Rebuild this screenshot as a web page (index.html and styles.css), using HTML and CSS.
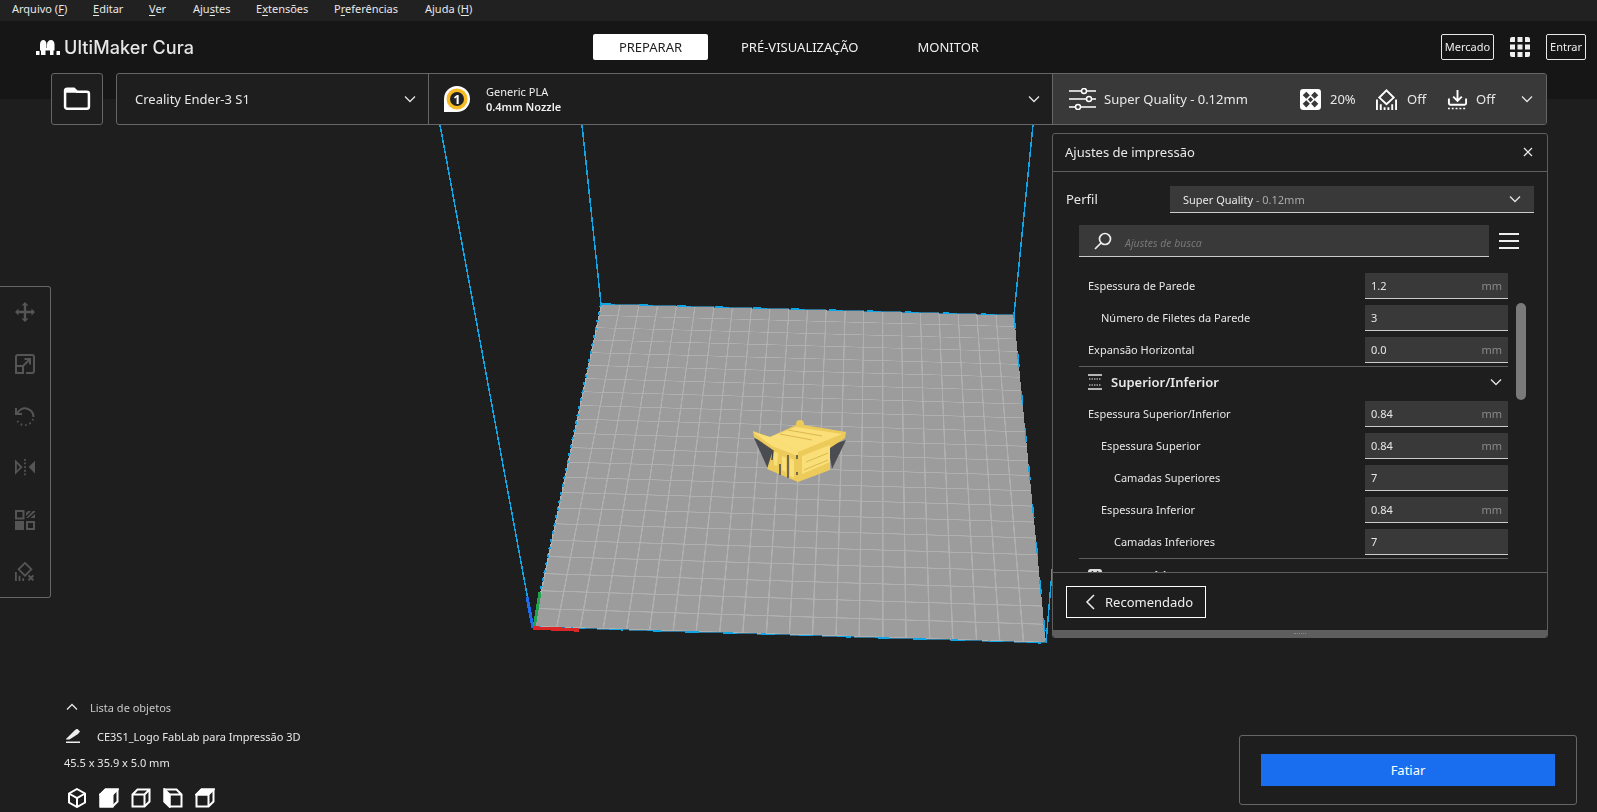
FILE: index.html
```html
<!DOCTYPE html>
<html lang="pt">
<head>
<meta charset="utf-8">
<title>UltiMaker Cura</title>
<link rel="stylesheet" href="styles.css">
</head>
<body>
<div class="app">
  <div class="scene">
    <div class="plate"></div>
    <svg class="wires" viewBox="0 0 1597 812">
      <g class="wire">
        <path d="M440 125 L533 627"/>
        <path d="M582 125 L601 304"/>
        <path d="M1033 125 L1014 315"/>
        <path d="M1046 643 L1053 560"/>
      </g>
      <g class="edge">
        <path d="M601 304 L1014 315"/>
        <path d="M533 627 L1046 643"/>
      </g>
      <g class="edge-hi">
        <path d="M601 304 L1014 315"/>
        <path d="M533 627 L1046 643"/>
        <path d="M1014 315 L1046 643"/>
      </g>
      <path class="edge-side" d="M601 304 L533 627"/>
      <path class="axis-blue" d="M527 597 L533 628"/>
      <path class="axis-green" d="M540 592 L534 628"/>
      <path class="axis-red" d="M533 628 L579 630"/>
    </svg>
    <svg class="model" viewBox="0 0 130 100">
      <path fill="#4b4b52" d="M24 38 L38 69 L45 50 L30 40Z"/>
      <path fill="#4b4b52" d="M116 40 L102 69 L98 46Z"/>
      <path fill="#eccb5a" d="M23 31 L40 37 L68 24 L116 32 L115 38 L100 48 L100 70 L68 82 L37 69 L43 50 L24 37Z"/>
      <path fill="#fadf79" d="M40 37 L66 27 L112 34 L68 52Z"/>
      <path fill="#fadf79" d="M23 32 L40 37 L68 52 L68 56 L42 46Z"/>
      <path fill="#fadf79" d="M72 56 L100 45 L100 62 L72 74Z"/>
      <path fill="#fadf79" d="M44 52 L48 53 L47 66 L44 65Z M52 56 L56 58 L56 72 L52 70Z M60 58 L64 60 L64 78 L60 76Z"/>
      <path fill="#eccb5a" d="M66 24 a4 4 0 0 1 8 0 v3 h-8Z"/>
      <path fill="none" stroke="#dcb84c" stroke-width="1" d="M50 34 L82 40 M58 30 L92 36 M76 62 L98 53 M74 70 L98 60"/>
      <path fill="none" stroke="#3f3f47" stroke-width="1.400" d="M43 50 L42 60 M50 64 L50 75 M58 55 L58 78 M67 55 L67 59 M67 72 L67 75"/>
    </svg>
  </div>

  <nav class="menubar">
    <span class="menu m1">Arquivo (<u>F</u>)</span>
    <span class="menu m2"><u>E</u>ditar</span>
    <span class="menu m3"><u>V</u>er</span>
    <span class="menu m4">Aju<u>s</u>tes</span>
    <span class="menu m5">E<u>x</u>tensões</span>
    <span class="menu m6">P<u>r</u>eferências</span>
    <span class="menu m7">Ajuda (<u>H</u>)</span>
  </nav>

  <div class="top">
    <header class="header">
      <div class="logo">
        <svg class="logo-mark" viewBox="0 0 24 15"><path d="M0 11h3.500v4H0z M5 15v-4.500H4V4.500C4 1.500 5.500 0 7.300 0s3.200 1.500 3.200 4.500V8H11V4.500C11 1.500 12.900 0 15 0s3.500 1.500 3.500 4.500v6h-1V15h-3.500v-4.500h-4.500V15z M20.500 11H24v4h-3.500z"/></svg>
        <span class="logo-text">UltiMaker Cura</span>
      </div>
      <div class="tabs">
        <span class="tab active">PREPARAR</span>
        <span class="tab t2">PRÉ-VISUALIZAÇÃO</span>
        <span class="tab t3">MONITOR</span>
      </div>
      <div class="account">
        <span class="outline-btn mercado">Mercado</span>
        <svg class="apps" viewBox="0 0 20 20"><path d="M0 2a2 2 0 0 1 2-2h3v5H0z M7.500 0h5v5h-5z M15 0h3a2 2 0 0 1 2 2v3h-5z M0 7.500h5v5H0z M7.500 7.500h5v5h-5z M15 7.500h5v5h-5z M0 15h5v5H2a2 2 0 0 1-2-2z M7.500 15h5v5h-5z M15 15h5v3a2 2 0 0 1-2 2h-3z"/></svg>
        <span class="outline-btn entrar">Entrar</span>
      </div>
    </header>

    <div class="toolbar">
      <div class="folder-btn">
        <svg class="folder" viewBox="0 0 27 23"><path class="folder-o" d="M2 3.500a2 2 0 0 1 2-2h6.500l3 3H23a2 2 0 0 1 2 2V19a2 2 0 0 1-2 2H4a2 2 0 0 1-2-2z"/><path class="folder-f" d="M2 3.500a2 2 0 0 1 2-2h6.500l3 3v1H2z"/></svg>
      </div>
      <div class="machine-bar">
        <div class="machine">
          <span class="machine-name">Creality Ender-3 S1</span>
          <svg class="chev" viewBox="0 0 12 8"><path d="M1 1.500l5 5 5-5"/></svg>
        </div>
        <div class="material">
          <svg class="badge" viewBox="0 0 26 26"><path fill="#fff" d="M13 0a13 13 0 1 1 0 26H0V13A13 13 0 0 1 13 0z"/><circle cx="13" cy="13" r="10.500" fill="#f7b924"/><circle cx="13" cy="13" r="7" fill="#232323"/><text x="13" y="17.500" class="badge-n">1</text></svg>
          <div class="material-text">
            <span>Generic PLA</span>
            <strong>0.4mm Nozzle</strong>
          </div>
          <svg class="chev" viewBox="0 0 12 8"><path d="M1 1.500l5 5 5-5"/></svg>
        </div>
        <div class="quality">
          <svg class="sliders" viewBox="0 0 27 22"><path d="M0 3h27M0 11h27M0 19h27"/><circle cx="15" cy="3" r="2.500"/><circle cx="20" cy="11" r="2.500"/><circle cx="9" cy="19" r="2.500"/></svg>
          <span class="quality-name">Super Quality - 0.12mm</span>
          <svg class="q-icon infill" viewBox="0 0 20 20"><rect width="20" height="20" rx="3" fill="#fff"/><path fill="#393939" d="M6 2.500l3.400 3.400-3.400 3.400-3.400-3.400z M14 2.500l3.400 3.400-3.400 3.400-3.400-3.400z M10 7.500l2.500 2.500-2.500 2.500L7.500 10z M6 10.700l3.400 3.400-3.400 3.400-3.400-3.400z M14 10.700l3.400 3.400-3.400 3.400-3.400-3.400z"/></svg>
          <span class="q-val v1">20%</span>
          <svg class="q-icon support" viewBox="0 0 22 22"><path class="line" d="M11 1.500l7.500 7.500-7.500 7-7.500-7z" /><path class="line" d="M1 11v11M5 16v6M9 19v3M13 19v3M17 16v6M21 11v11"/></svg>
          <span class="q-val v2">Off</span>
          <svg class="q-icon adhesion" viewBox="0 0 22 22"><path class="line" d="M11 1v11M6.500 8l4.500 4.500L15.500 8M2 10v5a1.500 1.500 0 0 0 1.500 1.500h15A1.500 1.500 0 0 0 20 15v-5"/><path class="dots" d="M1 20.500h20"/></svg>
          <span class="q-val v3">Off</span>
          <svg class="chev" viewBox="0 0 12 8"><path d="M1 1.500l5 5 5-5"/></svg>
        </div>
      </div>
    </div>
  </div>

  <main class="work">
    <div class="left-col">
      <aside class="tools">
        <svg class="tool" viewBox="0 0 20 20"><path d="M10 0l3.500 3.500h-2.300v5.300h5.300V6.500L20 10l-3.500 3.500v-2.300h-5.300v5.300h2.300L10 20l-3.500-3.500h2.300v-5.300H3.500v2.300L0 10l3.500-3.500v2.300h5.300V3.500H6.500z"/></svg>
        <svg class="tool line-tool" viewBox="0 0 20 20"><path d="M3 19a2 2 0 0 1-2-2V3a2 2 0 0 1 2-2h14a2 2 0 0 1 2 2v14a2 2 0 0 1-2 2h-6"/><path d="M8 12l7-7M9.500 5H15v5.500"/><rect x="1" y="12" width="7" height="7"/></svg>
        <svg class="tool line-tool" viewBox="0 0 20 20"><path d="M1 2v6h6"/><path d="M2 8a8.500 8.500 0 0 1 16.500 3"/><path class="dotted" d="M18 13a8.500 8.500 0 0 1-16 1"/></svg>
        <svg class="tool" viewBox="0 0 22 20"><path d="M22 2v14l-7-7z"/><path class="hollow" d="M1 3v12l6-6z"/><path class="dotted-f" d="M11 0v20"/></svg>
        <svg class="tool" viewBox="0 0 20 20"><rect class="hollow" x="1" y="1" width="7.500" height="7.500"/><path d="M11 8l7-7h2v1l-7 6z M11 3l2-2h3l-5 5z M15.500 8L20 4v4z"/><path d="M0 11h9v9H0z"/><rect class="hollow" x="12" y="12" width="7" height="7"/></svg>
        <svg class="tool" viewBox="0 0 22 22"><path class="hollow" d="M11 1l7 7-7 7-7-7z"/><path d="M0 11h2v10H0z M4 15h2v6H4z M8 18h2v3H8z"/><path d="M14 15.500l1.500-1.500 2 2 2-2 1.500 1.500-2 2 2 2-1.500 1.500-2-2-2 2-1.500-1.500 2-2z"/></svg>
      </aside>
      <section class="objects">
        <div class="obj-head">
          <svg class="chev-up" viewBox="0 0 12 8"><path d="M1 6.500l5-5 5 5"/></svg>
          <span>Lista de objetos</span>
        </div>
        <div class="obj-name">
          <svg class="pencil" viewBox="0 0 14 14"><path d="M0 10.500L8.500 2 11 0l3 3-2 2.500L3.500 11H0z" transform="translate(0 -.5)"/><path d="M0 12.500h14V14H0z"/></svg>
          <span>CE3S1_Logo FabLab para Impressão 3D</span>
        </div>
        <div class="obj-size">45.5 x 35.9 x 5.0 mm</div>
        <div class="views">
          <svg class="view" viewBox="0 0 20 20"><path d="M10 1l8 4.500v9L10 19l-8-4.500v-9z M2 5.500l8 4.500 8-4.500 M10 10v9"/></svg>
          <svg class="view" viewBox="0 0 20 20"><path d="M1.500 6.500l5-5h12v12l-5 5h-12z"/><path class="face" d="M1.500 6.500h12v12h-12z"/><path class="face" d="M1.500 6.500l5-5h12l-5 5z"/></svg>
          <svg class="view" viewBox="0 0 20 20"><path d="M1.500 6.500l5-5h12v12l-5 5h-12z M1.500 6.500h12v12 M13.500 6.500l5-5"/></svg>
          <svg class="view" viewBox="0 0 20 20"><path d="M1.500 1.500h12l5 5v12h-12l-5-5z M6.500 18.500v-12h12"/><path class="face" d="M1.500 1.500l5 5v12l-5-5z"/></svg>
          <svg class="view" viewBox="0 0 20 20"><path d="M1.500 6.500l5-5h12v12l-5 5h-12z M1.500 6.500h12v12"/><path class="face" d="M1.500 6.500l5-5h12l-5 5z"/></svg>
        </div>
      </section>
    </div>

    <div class="right-col">
      <section class="panel">
        <div class="panel-head">
          <span>Ajustes de impressão</span>
          <svg class="close" viewBox="0 0 10 10"><path d="M1 1l8 8M9 1l-8 8"/></svg>
        </div>
        <div class="profile">
          <span class="profile-label">Perfil</span>
          <div class="combo">
            <span>Super Quality <em>- 0.12mm</em></span>
            <svg class="chev" viewBox="0 0 12 8"><path d="M1 1.500l5 5 5-5"/></svg>
          </div>
        </div>
        <div class="search-row">
          <div class="search">
            <svg class="lens" viewBox="0 0 18 18"><circle cx="11" cy="7" r="5.500"/><path d="M7 11l-6 6"/></svg>
            <span>Ajustes de busca</span>
          </div>
          <svg class="burger" viewBox="0 0 20 18"><path d="M0 2h20M0 9h20M0 16h20"/></svg>
        </div>
        <div class="settings">
          <div class="list">
            <div class="row"><span class="lbl">Espessura de Parede</span><div class="inp"><span>1.2</span><i>mm</i></div></div>
            <div class="row"><span class="lbl ind1">Número de Filetes da Parede</span><div class="inp"><span>3</span></div></div>
            <div class="row"><span class="lbl">Expansão Horizontal</span><div class="inp"><span>0.0</span><i>mm</i></div></div>
            <div class="cat">
              <svg class="cat-icon" viewBox="0 0 14 16"><path class="solid" d="M0 1h14M0 15h14"/><path class="dash" d="M1 5h12M1 11h12"/></svg>
              <strong>Superior/Inferior</strong>
              <svg class="chev" viewBox="0 0 12 8"><path d="M1 1.500l5 5 5-5"/></svg>
            </div>
            <div class="row"><span class="lbl">Espessura Superior/Inferior</span><div class="inp"><span>0.84</span><i>mm</i></div></div>
            <div class="row"><span class="lbl ind1">Espessura Superior</span><div class="inp"><span>0.84</span><i>mm</i></div></div>
            <div class="row"><span class="lbl ind2">Camadas Superiores</span><div class="inp"><span>7</span></div></div>
            <div class="row"><span class="lbl ind1">Espessura Inferior</span><div class="inp"><span>0.84</span><i>mm</i></div></div>
            <div class="row"><span class="lbl ind2">Camadas Inferiores</span><div class="inp"><span>7</span></div></div>
            <div class="cat cat-next">
              <svg class="cat-icon" viewBox="0 0 16 16"><rect width="16" height="16" rx="3" fill="#ddd"/><path fill="#1e1e1e" d="M5 2l2 2-2 2-2-2z M11 2l2 2-2 2-2-2z"/></svg>
              <strong>Preenchimento</strong>
              <svg class="chev" viewBox="0 0 12 8"><path d="M1 1.500l5 5 5-5"/></svg>
            </div>
          </div>
          <div class="scrollbar"></div>
        </div>
        <div class="panel-foot">
          <div class="reco">
            <svg class="back" viewBox="0 0 10 16"><path d="M9 1L2 8l7 7"/></svg>
            <span>Recomendado</span>
          </div>
        </div>
        <div class="handle"><span></span></div>
      </section>
      <section class="slice-box">
        <div class="slice-btn">Fatiar</div>
      </section>
    </div>
  </main>
</div>
</body>
</html>
```

FILE: styles.css
```css
* { box-sizing: border-box; }
html, body { margin: 0; height: 100%; overflow: hidden; background: #1e1e1e; }
body { font-family: "Noto Sans", sans-serif; color: #e8e8e8; font-size: 12px; }
.app { position: relative; width: 1597px; height: 812px; display: flex; flex-direction: column; overflow: hidden; }
svg { display: block; flex: none; }

/* 3D scene */
.scene { position: absolute; inset: 0; overflow: hidden; }
.plate {
  position: absolute; left: 0; top: 0; width: 1000px; height: 1000px;
  transform-origin: 0 0;
  transform: matrix3d(0.407167, 0.009188, 0, -0.000005753, -0.17171, 0.2010, 0, -0.00019457, 0, 0, 1, 0, 601, 304, 0, 1);
  background-color: #9c9c9c;
  background-image:
    repeating-linear-gradient(90deg, #b0b0b0 0 3px, transparent 3px 45.4545px),
    repeating-linear-gradient(0deg, #b0b0b0 0 3px, transparent 3px 45.4545px);
}
.wires { position: absolute; inset: 0; width: 1597px; height: 812px; shape-rendering: crispEdges; }
.wire path { fill: none; stroke: #10a5e4; stroke-width: 1.500; }
.edge path { fill: none; stroke: #2b7294; stroke-width: 1; }
.edge-hi path { fill: none; stroke: #10a5e4; stroke-width: 1.500; stroke-dasharray: 14 24; }
.edge-side { fill: none; stroke: #10a5e4; stroke-width: 2; stroke-dasharray: 3 5; }
.axis-blue { fill: none; stroke: #1a6cf0; stroke-width: 3; }
.axis-green { fill: none; stroke: #1fa34f; stroke-width: 3; }
.axis-red { fill: none; stroke: #dc2626; stroke-width: 3.500; }
.model { position: absolute; left: 730px; top: 400px; width: 130px; height: 100px; }

/* Menu */
.menubar { position: relative; height: 21px; background: #212121; font-size: 11px; color: #e8e8e8; line-height: 17px; display: flex; padding-left: 12px; }
.menu u { text-decoration-thickness: 1px; text-underline-offset: 2px; }
.m1 { width: 81px; } .m2 { width: 56px; } .m3 { width: 44px; } .m4 { width: 63px; } .m5 { width: 78px; } .m6 { width: 91px; }

/* Header */
.top { position: relative; background: linear-gradient(#161616 0 78px, transparent 78px); height: 105px; display: flex; flex-direction: column; }
.header { height: 52px; position: relative; display: flex; align-items: center; }
.logo { display: flex; align-items: center; gap: 4px; margin-left: 36px; width: 557px; padding-top: 1px; }
.logo-mark { width: 24px; height: 15px; fill: #fff; }
.logo-text { font-family: Inter, sans-serif; font-size: 18px; font-weight: 500; color: #e6e6e6; letter-spacing: .1px; }
.tabs { display: flex; align-items: center; font-size: 13px; color: #f0f0f0; }
.tab { display: block; line-height: 26px; }
.tab.active { width: 115px; background: #fff; color: #1e1e1e; border-radius: 2px; text-align: center; }
.t2 { margin-left: 33px; }
.t3 { margin-left: 59px; }
.account { margin-left: auto; display: flex; align-items: center; padding-right: 11px; }
.outline-btn { display: block; border: 1px solid #e8e8e8; border-radius: 2px; font-size: 11px; line-height: 24px; height: 26px; text-align: center; color: #eee; }
.mercado { width: 53px; }
.apps { width: 20px; height: 20px; fill: #eee; margin: 0 16px; }
.entrar { width: 40px; }

/* Toolbar */
.toolbar { display: flex; margin: 0 0 0 51px; height: 52px; gap: 13px; }
.folder-btn { width: 52px; border: 1px solid #666; border-radius: 3px; background: #1e1e1e; display: flex; align-items: center; justify-content: center; }
.folder { width: 28px; height: 24px; }
.folder-o { fill: none; stroke: #fff; stroke-width: 2.400; }
.folder-f { fill: #fff; }
.machine-bar { width: 1431px; display: flex; border: 1px solid #666; border-radius: 3px; background: #1e1e1e; overflow: hidden; }
.chev { width: 12px; height: 8px; }
.chev path { fill: none; stroke: #e4e4e4; stroke-width: 1.300; }
.machine { width: 312px; display: flex; align-items: center; padding: 0 12px 0 18px; border-right: 1px solid #666; font-size: 13px; }
.machine-name { flex: 1; }
.material { width: 623px; display: flex; align-items: center; padding: 0 12px 0 15px; }
.badge { width: 26px; height: 26px; }
.badge-n { font: 700 13px "Noto Sans", sans-serif; fill: #fff; text-anchor: middle; }
.material-text { flex: 1; display: flex; flex-direction: column; margin-left: 16px; font-size: 11px; line-height: 15px; color: #f0f0f0; }
.material-text strong { font-weight: 600; }
.quality { flex: 1; background: #393939; border-left: 1px solid #666; display: flex; align-items: center; padding: 0 0 0 16px; font-size: 13px; }
.sliders { width: 27px; height: 22px; }
.sliders path { fill: none; stroke: #fff; stroke-width: 1.500; }
.sliders circle { fill: #393939; stroke: #fff; stroke-width: 1.500; }
.quality-name { margin-left: 8px; width: 196px; }
.q-icon { width: 21px; height: 21px; }
.q-icon .line { fill: none; stroke: #fff; stroke-width: 2; }
.q-icon .dots { fill: none; stroke: #fff; stroke-width: 1.500; stroke-dasharray: 2 2; }
.v1 { margin-left: 9px; width: 46px; }
.v2 { margin-left: 10px; width: 40px; }
.v3 { margin-left: 8px; width: 45px; }

/* Work area */
.work { position: relative; flex: 1; display: flex; justify-content: space-between; min-height: 0; }
.left-col { display: flex; flex-direction: column; }
.tools { width: 51px; height: 312px; margin-top: 160px; border: 1px solid #666; border-left: 0; border-radius: 0 3px 3px 0; background: #1e1e1e; display: flex; flex-direction: column; align-items: center; justify-content: space-between; padding: 15px 0 15px; }
.tool { width: 20px; height: 20px; fill: #555; }
.tool.line-tool { fill: none; stroke: #555; stroke-width: 2; }
.tool .hollow { fill: none; stroke: #555; stroke-width: 2; }
.tool .dotted { stroke-dasharray: 1.500 3; }
.tool .dotted-f { fill: none; stroke: #555; stroke-width: 2; stroke-dasharray: 2 2; }
.objects { margin: auto 0 4px 64px; font-size: 11px; }
.obj-head { display: flex; align-items: center; color: #c8c8c8; height: 20px; padding-left: 2px; margin-top: -1px; }
.chev-up { width: 12px; height: 8px; margin-right: 12px; }
.chev-up path { fill: none; stroke: #e6e6e6; stroke-width: 1.300; }
.obj-name { display: flex; align-items: center; margin-top: 10px; height: 18px; padding-left: 2px; color: #e8e8e8; }
.pencil { width: 14px; height: 14px; fill: #eee; margin-right: 17px; }
.obj-size { margin-top: 10px; height: 16px; line-height: 16px; color: #e8e8e8; }
.views { display: flex; gap: 12px; margin-top: 17px; padding-left: 3px; }
.view { width: 20px; height: 20px; fill: none; stroke: #fff; stroke-width: 2; }
.view .face { fill: #fff; stroke: #fff; }

.right-col { width: 525px; margin-right: 20px; display: flex; flex-direction: column; align-items: flex-start; }
.panel { width: 496px; height: 505px; margin-top: 7px; border: 1px solid #5e5e5e; border-radius: 3px; background: #1e1e1e; display: flex; flex-direction: column; overflow: hidden; }
.panel-head { height: 38px; flex: none; display: flex; align-items: center; justify-content: space-between; padding: 0 14px 2px 12px; border-bottom: 1px solid #5e5e5e; font-size: 13px; }
.close { width: 10px; height: 10px; }
.close path { stroke: #e4e4e4; stroke-width: 1.300; fill: none; }
.profile { flex: none; display: flex; align-items: center; justify-content: space-between; margin: 14px 13px 0 13px; height: 27px; font-size: 13px; }
.profile-label { margin-top: -2px; }
.combo { width: 364px; height: 27px; background: #393939; border-bottom: 1px solid #ccc; display: flex; align-items: center; justify-content: space-between; padding: 0 13px; font-size: 11px; }
.combo em { font-style: normal; color: #a8a8a8; }
.search-row { flex: none; display: flex; align-items: center; margin: 12px 0 0 26px; height: 32px; }
.search { width: 410px; height: 32px; background: #393939; border-bottom: 1px solid #ccc; display: flex; align-items: center; padding-left: 15px; font-size: 10.500px; font-style: italic; color: #777; gap: 13px; }
.search span { padding-top: 5px; }
.lens { width: 18px; height: 18px; fill: none; stroke: #eee; stroke-width: 1.700; }
.burger { width: 20px; height: 18px; margin: 0 0 0 10px; fill: none; stroke: #eee; stroke-width: 2.200; }
.settings { flex: 1; min-height: 0; display: flex; margin-top: 16px; overflow: hidden; padding-left: 26px; }
.list { width: 429px; flex: none; }
.row { height: 26px; margin-bottom: 6px; display: flex; align-items: center; font-size: 11px; }
.lbl { flex: 1; padding: 0 0 2px 9px; color: #e6e6e6; }
.lbl.ind1 { padding-left: 22px; }
.lbl.ind2 { padding-left: 35px; }
.inp { width: 143px; height: 26px; background: #393939; border-bottom: 1px solid #ccc; display: flex; align-items: center; justify-content: space-between; padding: 0 6px; color: #e6e6e6; }
.inp i { font-style: normal; color: #8a8a8a; }
.cat { height: 35px; margin: -3px 0 0; border-top: 1px solid #5e5e5e; display: flex; align-items: center; padding: 0 6px 5px 9px; font-size: 13px; }
.cat strong { flex: 1; font-weight: 600; margin-left: 9px; }
.cat-icon { width: 14px; height: 16px; }
.cat-icon .solid { stroke: #e8e8e8; stroke-width: 1.500; fill: none; }
.cat-icon .dash { stroke: #e8e8e8; stroke-width: 1.200; stroke-dasharray: 1.500 1; fill: none; }
.cat-next { align-items: flex-start; padding-top: 9px; }
.cat-next strong { margin-top: -1px; }
.cat-next .chev { margin-top: 3px; }
.scrollbar { width: 10px; height: 97px; margin: 30px 0 0 8px; background: #7a7a7a; border-radius: 5px; }
.panel-foot { flex: none; height: 58px; border-top: 1px solid #5e5e5e; padding: 13px 13px; }
.reco { width: 140px; height: 32px; border: 1px solid #fff; display: flex; align-items: center; padding-left: 18px; gap: 10px; font-size: 13px; color: #eee; }
.back { width: 10px; height: 16px; fill: none; stroke: #eee; stroke-width: 1.500; }
.handle { flex: none; height: 7px; background: #5e5e5e; display: flex; align-items: center; justify-content: center; }
.handle span { width: 12px; border-top: 1px dotted #888; }
.slice-box { align-self: flex-end; width: 338px; height: 70px; margin: auto 0 7px; border: 1px solid #666; border-radius: 3px; background: #1e1e1e; padding: 18px 21px; }
.slice-btn { height: 32px; background: #196ef0; color: #fff; text-align: center; line-height: 32px; font-size: 13px; }
```
